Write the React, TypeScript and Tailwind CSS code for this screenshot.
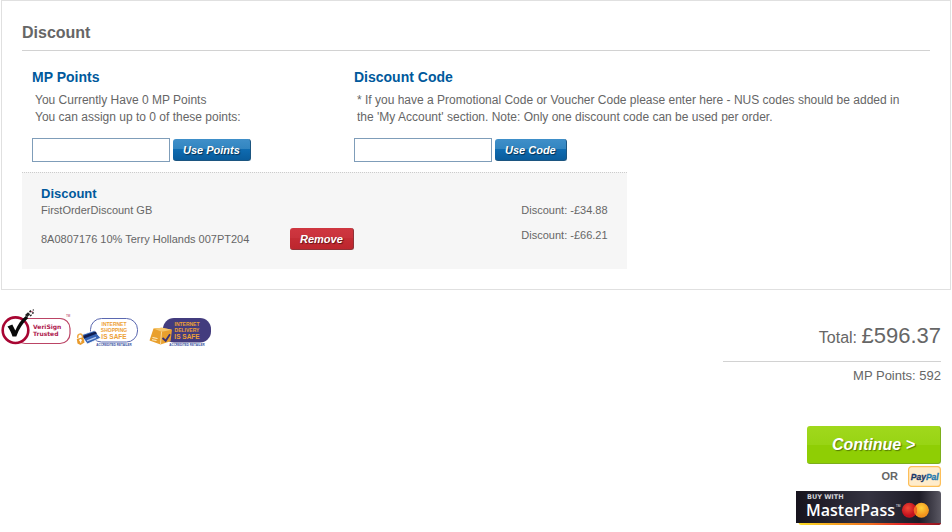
import { ReactNode } from "react";
import clsx from "clsx";

type TDiscount = {
  name: string;
  amount: string;
  removable: boolean;
};

const discounts: TDiscount[] = [
  { name: "FirstOrderDiscount GB", amount: "-£34.88", removable: false },
  {
    name: "8A0807176 10% Terry Hollands 007PT204",
    amount: "-£66.21",
    removable: true,
  },
];

type TSmallButtonProps = {
  color: "blue" | "red";
  children: ReactNode;
};

function SmallButton({ color, children }: TSmallButtonProps) {
  return (
    <button
      type="button"
      className={clsx(
        "h-[22px] shrink-0 rounded-[3px] border-r border-b px-[10px] text-[11px] leading-[20px] font-bold italic text-white [text-shadow:1px_1px_1px_rgba(0,0,0,0.5)]",
        color === "blue" &&
          "border-[#1c5580] bg-[linear-gradient(#3f8fc9,#3285c0_48%,#0f6bb0_50%,#0a5c9c)]",
        color === "red" &&
          "border-[#8f3338] bg-[linear-gradient(#cf3740,#c9323b_48%,#c42c34_50%,#bd262e)]"
      )}
    >
      {children}
    </button>
  );
}

type TCodeFormProps = {
  id: string;
  title: string;
  button: string;
  children: ReactNode;
};

function CodeForm({ id, title, button, children }: TCodeFormProps) {
  return (
    <form>
      <h3 className="text-sm leading-5 font-bold text-[#00599c]">
        <label htmlFor={id}>{title}</label>
      </h3>
      <p className="mt-[5px] pr-4 pl-[3px] text-xs leading-[17px]">{children}</p>
      <div className="mt-3 flex items-center gap-[3px]">
        <input
          id={id}
          type="text"
          className="h-6 w-[138px] border border-[#7f9db9] bg-white px-1 text-xs"
        />
        <SmallButton color="blue">{button}</SmallButton>
      </div>
    </form>
  );
}

function VeriSignLogo() {
  return (
    <svg width="71" height="38" viewBox="0 0 71 38" role="img" aria-label="VeriSign Trusted">
      <rect x="14" y="9.5" width="55" height="25" rx="10" fill="#fff" stroke="#bb4465" strokeWidth="1.2" />
      <circle cx="14.5" cy="21.2" r="12.8" fill="#fff" stroke="#a80532" strokeWidth="2.6" />
      <path d="M6.500 17.500l4.800-2 3 6c2.500-6 6-11 10.500-14.500l2.500 2C22 13.500 18 20 15.300 27.500h-3.800c-1.200-3.700-2.800-7-5-10z" fill="#0a0a0a" />
      <path d="M24 6l3-2.800 2.200 2-3 3zM28 2.200l1.600-1.200 1 1.500-1.600 1.300zM30.800 3.800l1.500-1 .7 1.400-1.500.8zM28.500 6.500l1.800-1.200.6 1.200-1.600 1zM31.500.8l1.200-.6.4 1-1.200.6z" fill="#222" />
      <path d="M30.300 2.600l1-.5.3 1-.9.4z" fill="#a80532" />
      <g fontSize="6" fontWeight="bold" fontFamily="DejaVu Sans, sans-serif" fill="#b02350">
        <text x="32" y="19.500">VeriSign</text>
        <text x="32" y="26.500">Trusted</text>
      </g>
      <text x="65" y="7.500" fontSize="3" fontFamily="Liberation Sans, Arial, sans-serif" fill="#b02350">TM</text>
    </svg>
  );
}

function SafeText({ top }: { top: string }) {
  return (
    <g
      fontFamily="Liberation Sans Narrow, Liberation Sans, Arial, sans-serif"
      fontWeight="bold"
      textAnchor="middle"
    >
      <g fill="#eda135">
        <text x="38" y="13" fontSize="5">INTERNET</text>
        <text x="38" y="18.800" fontSize="5">{top}</text>
        <text x="38" y="26" fontSize="6.500">IS SAFE</text>
      </g>
      <text x="38" y="32.500" fontSize="3" fill="#344a9c">ACCREDITED RETAILER</text>
    </g>
  );
}

function ShoppingLogo() {
  return (
    <svg width="64" height="34" viewBox="0 0 64 34" role="img" aria-label="Internet Shopping is Safe">
      <rect x="14.500" y="5.500" width="47" height="23.500" rx="11" fill="#fff" stroke="#5b68b0" />
      <path d="M5 22l13.300-4.500 6.400 7.500-13.400 6z" fill="#3563b4" stroke="#fff" strokeWidth=".8" />
      <path d="M6.300 23.200l13.200-4.700 1.600 2-12.800 5z" fill="#101f52" />
      <path d="M11 27.800l9-3.500" stroke="#b6cbf0" strokeWidth="1.300" />
      <path d="M1.800 25c-.8-4.500 4-5.500 5-1" fill="none" stroke="#efaa45" strokeWidth="1.500" />
      <path d="M.8 26l6.500-2 1.200 5.500-4 2.500-3-1.500z" fill="#e99b2c" />
      <circle cx="4.500" cy="27.200" r="1.200" fill="#fff" />
      <path d="M4.500 27.500l.3 2.300" stroke="#fff" />
      <SafeText top="SHOPPING" />
    </svg>
  );
}

function DeliveryLogo() {
  return (
    <svg width="64" height="34" viewBox="0 0 64 34" role="img" aria-label="Internet Delivery is Safe">
      <rect x="14" y="5" width="48" height="24.500" rx="11" fill="#433c7e" />
      <path d="M4.500 15.500l8.500-.8 10 2-1.500 11.500-10 3.300L.5 27.500z" fill="#e9a02e" />
      <path d="M4.500 15.500l8.500-.8 10 2-10.500 2z" fill="#f6c66c" />
      <path d="M12.500 18.700l-1 12.500" stroke="#fbe0ab" strokeWidth=".9" />
      <path d="M3.500 24.500l5 1M3 26.700l4.500.8" stroke="#fff0cc" />
      <path d="M13.500 25l3.200 2.800 4.300-6.500" fill="none" stroke="#3b3474" strokeWidth="1.800" />
      <SafeText top="DELIVERY" />
    </svg>
  );
}

function PayPalLogo() {
  return (
    <svg width="33" height="21" viewBox="0 0 33 21" role="img" aria-label="PayPal">
      <rect x=".6" y=".6" width="31.800" height="19.800" rx="3" fill="#ffeccb" stroke="#fdbf59" strokeWidth="1.200" />
      <text x="2.800" y="13.500" fontSize="8.500" fontWeight="bold" fontStyle="italic" fontFamily="Liberation Sans, Arial, sans-serif" fill="#1a3668" stroke="#1a3668" strokeWidth=".3">
        Pay<tspan fill="#2278ae" stroke="#2278ae">Pal</tspan>
      </text>
    </svg>
  );
}

function MasterPassLogo() {
  return (
    <svg width="145" height="34" viewBox="0 0 145 34" role="img" aria-label="Buy with MasterPass">
      <defs>
        <linearGradient id="mp-bg">
          <stop offset="0" stopColor="#16131d" />
          <stop offset=".5" stopColor="#353341" />
          <stop offset=".85" stopColor="#1d1b26" />
          <stop offset="1" stopColor="#5a5863" />
        </linearGradient>
        <linearGradient id="mp-line">
          <stop offset="0" stopColor="#fbdc25" />
          <stop offset=".5" stopColor="#f0701f" />
          <stop offset=".75" stopColor="#e0202b" />
          <stop offset="1" stopColor="#8d1620" />
        </linearGradient>
        <radialGradient id="mp-red" cx=".4" cy=".35">
          <stop offset="0" stopColor="#f04a35" />
          <stop offset="1" stopColor="#c4121e" />
        </radialGradient>
        <radialGradient id="mp-yellow" cx=".5" cy=".35">
          <stop offset="0" stopColor="#ffd33c" />
          <stop offset="1" stopColor="#f2941d" />
        </radialGradient>
      </defs>
      <path d="M0 0h142q3 0 3 3v29H0z" fill="url(#mp-bg)" />
      <path d="M2.500 32h142.500q0 2-3 2H5q-2 0-2.500-2z" fill="url(#mp-line)" />
      <circle cx="125.400" cy="19.300" r="7.500" fill="url(#mp-yellow)" />
      <circle cx="113.400" cy="19.300" r="7.500" fill="url(#mp-red)" />
      <path d="M119.400 14.800a7.500 7.500 0 0 1 0 9 7.500 7.500 0 0 1 0-9z" fill="#f06a22" />
      <text x="11" y="7.500" fontSize="6.500" fontWeight="bold" fontFamily="DejaVu Sans, sans-serif" fill="#d4d3d8">BUY WITH</text>
      <g fill="#fff" fontFamily="Open Sans, Noto Sans, sans-serif">
        <text x="10" y="25" fontSize="16" fontWeight="600">MasterPass</text>
        <text x="100" y="16" fontSize="3">TM</text>
      </g>
    </svg>
  );
}

function App() {
  return (
    <main className="bg-white px-px font-['Liberation_Sans',Arial,sans-serif] text-[#666]">
      <section className="border border-[#e0e0e0] px-5 pt-5 pb-5">
        <h2 className="border-b border-[#d2d2d2] pb-[5px] text-base leading-6 font-bold">
          Discount
        </h2>
        <div className="grid grid-cols-[322px_1fr] pt-4 pb-[10px] pl-[10px]">
          <CodeForm id="points" title="MP Points" button="Use Points">
            You Currently Have 0 MP Points
            <br />
            You can assign up to 0 of these points:
          </CodeForm>
          <CodeForm id="code" title="Discount Code" button="Use Code">
            * If you have a Promotional Code or Voucher Code please enter here -
            NUS codes should be added in the 'My Account' section. Note: Only
            one discount code can be used per order.
          </CodeForm>
        </div>
        <div className="w-2/3 border-t border-dotted border-[#ccc] bg-[#f6f6f6] px-[19px] pt-3 pb-[19px]">
          <h3 className="text-[13px] leading-[17px] font-bold text-[#00599c]">
            Discount
          </h3>
          <table className="w-full text-[11px]">
            <tbody>
              {discounts.map((discount) => (
                <tr key={discount.name} className="align-top">
                  <td
                    className={clsx(
                      "w-[249px]",
                      discount.removable ? "pt-[10px] leading-[22px]" : "leading-4"
                    )}
                  >
                    {discount.name}
                  </td>
                  <td className={clsx(discount.removable && "pt-[10px]")}>
                    {discount.removable && (
                      <SmallButton color="red">Remove</SmallButton>
                    )}
                  </td>
                  <td
                    className={clsx(
                      "w-[87px] whitespace-nowrap",
                      discount.removable ? "pt-[10px] leading-[14px]" : "leading-4"
                    )}
                  >
                    Discount: {discount.amount}
                  </td>
                </tr>
              ))}
            </tbody>
          </table>
        </div>
      </section>

      <div className="flex items-start justify-between pt-[19px] pr-[10px]">
        <div className="flex items-start gap-1">
          <VeriSignLogo />
          <div className="flex gap-[9px] pt-1">
            <ShoppingLogo />
            <DeliveryLogo />
          </div>
        </div>
        <div className="flex w-[218px] flex-col items-end">
          <p className="w-full border-b border-[#d2d2d2] pt-[11px] pb-[7px] text-right text-base leading-8">
            Total: <span className="text-[22px]">£596.37</span>
          </p>
          <p className="pt-1 text-[13px] leading-5">MP Points: 592</p>
          <button
            type="button"
            className="mt-10 h-[38px] w-[134px] rounded-[3px] border-r border-b border-[#7cae1c] bg-[linear-gradient(#a0d81c,#98d414_50%,#8fce04_52%,#8fce04)] text-base font-bold italic text-white [text-shadow:1px_1px_1px_rgba(0,0,0,0.4)]"
          >
            Continue &gt;
          </button>
          <div className="mt-[2px] flex items-center gap-[10px]">
            <span className="text-[11px] font-bold">OR</span>
            <button type="button">
              <PayPalLogo />
            </button>
          </div>
          <button type="button" className="mt-1">
            <MasterPassLogo />
          </button>
        </div>
      </div>
    </main>
  );
}

export default App;
